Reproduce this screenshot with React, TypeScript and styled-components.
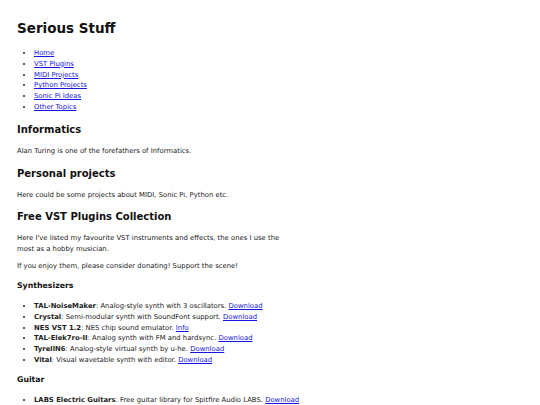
import styled, { createGlobalStyle } from "styled-components";

const GlobalStyle = createGlobalStyle`
  html, body {
    margin: 0;
    padding: 0;
    background: #ffffff;
  }
  body {
    font-family: "DejaVu Sans", Verdana, sans-serif;
    color: #222;
  }
`;

const Page = styled.main`
  padding: 20px 17px 0 17px;
  font-size: 6.85px;
  line-height: 10.8px;
`;

const Title = styled.h1`
  font-size: 13.5px;
  line-height: 17px;
  font-weight: bold;
  color: #111;
  margin: 0 0 11px 0;
`;

const List = styled.ul`
  margin: 0;
  padding-left: 17px;
`;

const Item = styled.li`
  list-style: disc;
`;

const Link = styled.a`
  color: #1515e0;
  text-decoration: underline;
`;

const Heading = styled.h2`
  font-size: 10px;
  line-height: 13px;
  font-weight: bold;
  color: #111;
  margin: 10px 0;
`;

const SubHeading = styled.h3`
  font-size: 7.8px;
  line-height: 10px;
  font-weight: bold;
  color: #111;
  margin: 9.5px 0;
`;

const Text = styled.p<{ $narrow?: boolean }>`
  margin: 6.2px 0;
  max-width: ${(p) => (p.$narrow ? "270px" : "none")};
`;

const navLinks = ["Home", "VST Plugins", "MIDI Projects", "Python Projects", "Sonic Pi Ideas", "Other Topics"];

const synths = [
  { name: "TAL-NoiseMaker", desc: "Analog-style synth with 3 oscillators.", link: "Download" },
  { name: "Crystal", desc: "Semi-modular synth with SoundFont support.", link: "Download" },
  { name: "NES VST 1.2", desc: "NES chip sound emulator.", link: "Info" },
  { name: "TAL-Elek7ro-II", desc: "Analog synth with FM and hardsync.", link: "Download" },
  { name: "TyrellN6", desc: "Analog-style virtual synth by u-he.", link: "Download" },
  { name: "Vital", desc: "Visual wavetable synth with editor.", link: "Download" },
];

const guitars = [
  { name: "LABS Electric Guitars", desc: "Free guitar library for Spitfire Audio LABS.", link: "Download" },
];

type Plugin = { name: string; desc: string; link: string };

const PluginList = ({ items }: { items: Plugin[] }) => (
  <List>
    {items.map((s) => (
      <Item key={s.name}>
        <b>{s.name}</b>: {s.desc} <Link href="#">{s.link}</Link>
      </Item>
    ))}
  </List>
);

const App = () => {
  return (
    <>
      <GlobalStyle />
      <Page>
        <Title>Serious Stuff</Title>
        <List>
          {navLinks.map((l) => (
            <Item key={l}>
              <Link href="#">{l}</Link>
            </Item>
          ))}
        </List>

        <Heading>Informatics</Heading>
        <Text>Alan Turing is one of the forefathers of Informatics.</Text>

        <Heading>Personal projects</Heading>
        <Text>Here could be some projects about MIDI, Sonic Pi, Python etc.</Text>

        <Heading>Free VST Plugins Collection</Heading>
        <Text $narrow>
          Here I've listed my favourite VST instruments and effects, the ones I use the most as a hobby musician.
        </Text>
        <Text>If you enjoy them, please consider donating! Support the scene!</Text>

        <SubHeading>Synthesizers</SubHeading>
        <PluginList items={synths} />

        <SubHeading>Guitar</SubHeading>
        <PluginList items={guitars} />
      </Page>
    </>
  );
};

export default App;
